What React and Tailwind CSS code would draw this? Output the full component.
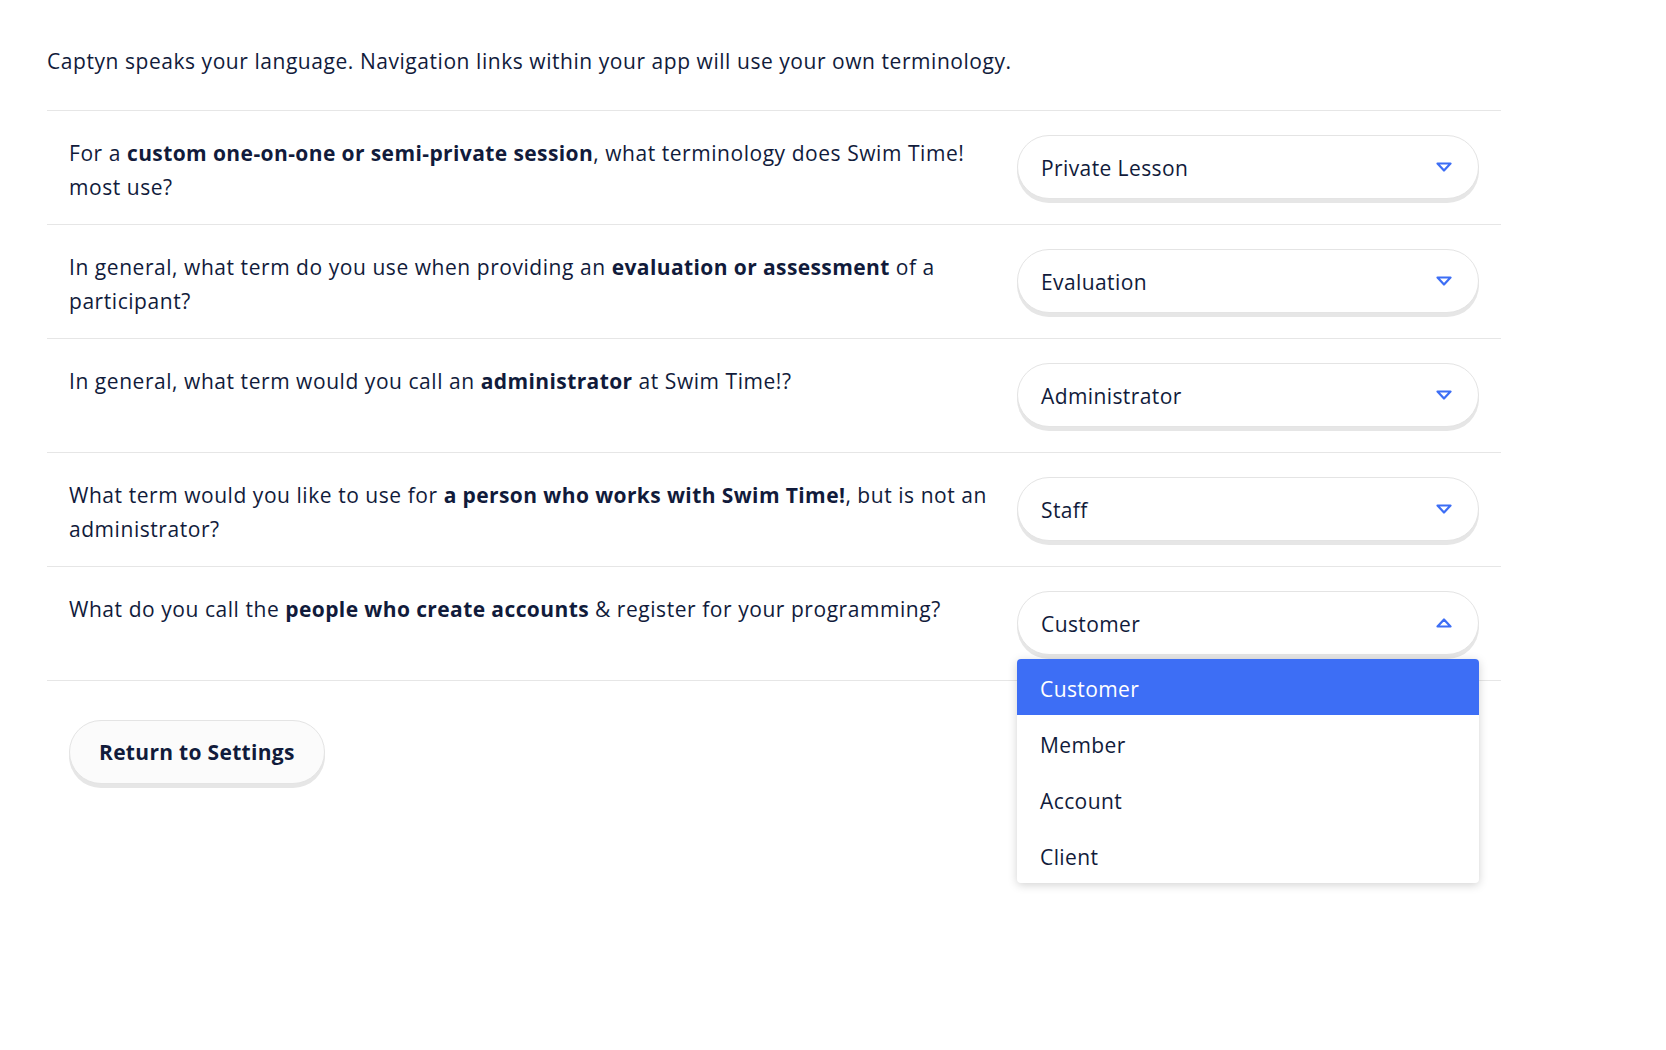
import { useState } from 'react';

const questions = [
  {
    id: 'session',
    text: <>For a <b>custom one-on-one or semi-private session</b>, what terminology does Swim Time! most use?</>,
    value: 'Private Lesson',
  },
  {
    id: 'evaluation',
    text: <>In general, what term do you use when providing an <b>evaluation or assessment</b> of a participant?</>,
    value: 'Evaluation',
  },
  {
    id: 'admin',
    text: <>In general, what term would you call an <b>administrator</b> at Swim Time!?</>,
    value: 'Administrator',
  },
  {
    id: 'staff',
    text: <>What term would you like to use for <b>a person who works with Swim Time!</b>, but is not an administrator?</>,
    value: 'Staff',
  },
  {
    id: 'customer',
    text: <>What do you call the <b>people who create accounts</b> &amp; register for your programming?</>,
    value: 'Customer',
    options: ['Customer', 'Member', 'Account', 'Client'],
    open: true,
  },
];

// small hollow triangle used as the select caret
const Chevron = ({ up }) => (
  <svg width="16" height="10" viewBox="0 0 16 10" fill="none" className="text-[#3d6ef5]">
    {up ? (
      <path d="M1.5 8.5 L8 1.5 L14.5 8.5 Z" stroke="currentColor" strokeWidth="2.2" strokeLinejoin="round" />
    ) : (
      <path d="M1.5 1.5 L8 8.5 L14.5 1.5 Z" stroke="currentColor" strokeWidth="2.2" strokeLinejoin="round" />
    )}
  </svg>
);

const Select = ({ q }) => {
  const [open, setOpen] = useState(!!q.open);
  return (
    <div className="relative w-[462px] shrink-0">
      <button
        onClick={() => setOpen(!open)}
        className="w-full h-[64px] flex items-center justify-between pl-[23px] pr-[26px] rounded-full bg-white border border-[#e4e4e4] shadow-[0_4px_0_#e6e6e6] text-[21px] tracking-[0.4px] text-[#111b3b]"
      >
        <span className="pt-[3px]">{q.value}</span>
        <Chevron up={open} />
      </button>
      {open && q.options && (
        <div className="absolute left-0 right-0 top-[68px] z-10 bg-white rounded-[4px] shadow-[0_2px_10px_rgba(0,0,0,0.18)] overflow-hidden">
          {q.options.map((o, i) => (
            <div
              key={o}
              className={
                i === 0
                  ? 'h-[56px] flex items-center pl-[23px] pt-[5px] text-[21px] tracking-[0.4px] bg-[#3d6ef5] text-white'
                  : 'h-[56px] flex items-center pl-[23px] pt-[5px] text-[21px] tracking-[0.4px] text-[#111b3b]'
              }
            >
              {o}
            </div>
          ))}
        </div>
      )}
    </div>
  );
};

export default function App() {
  return (
    <div className="min-h-screen bg-white text-[#111b3b] font-['Open_Sans','Noto_Sans',sans-serif]">
      <div className="ml-[47px] w-[1454px] pt-[45px]">
        <p className="text-[21px] leading-[32px] tracking-[0.55px] mb-[33px]">
          Captyn speaks your language. Navigation links within your app will use your own terminology.
        </p>
        <div className="border-t border-[#e6e6e6]">
          {questions.map((q) => (
            <div key={q.id} className="flex gap-[12px] px-[22px] pt-[24px] pb-[25px] border-b border-[#e6e6e6]">
              <div className="flex-1 pt-[1px] text-[21px] leading-[34px] tracking-[0.55px] -mb-[7px] [&_b]:font-bold [&_b]:tracking-[0.4px]">{q.text}</div>
              <Select q={q} />
            </div>
          ))}
        </div>
        <div className="pl-[22px] pt-[39px]">
          <button className="h-[64px] px-[29px] pt-[2px] rounded-full bg-[#fbfbfb] border border-[#e4e4e4] shadow-[0_4px_0_#e6e6e6] text-[21px] font-bold tracking-[0.3px] text-[#111b3b]">
            Return to Settings
          </button>
        </div>
      </div>
    </div>
  );
}
